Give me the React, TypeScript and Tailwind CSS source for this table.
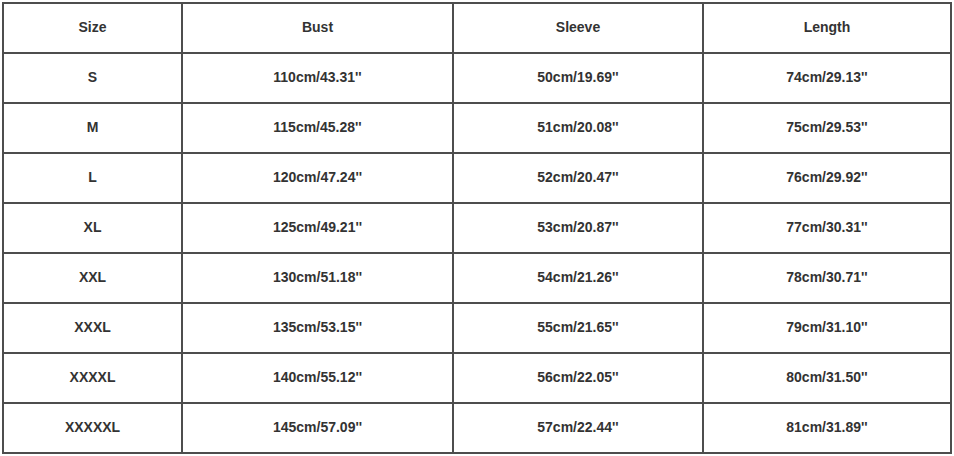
import React from "react";

const rows = [
  ["S", "110cm/43.31''", "50cm/19.69''", "74cm/29.13''"],
  ["M", "115cm/45.28''", "51cm/20.08''", "75cm/29.53''"],
  ["L", "120cm/47.24''", "52cm/20.47''", "76cm/29.92''"],
  ["XL", "125cm/49.21''", "53cm/20.87''", "77cm/30.31''"],
  ["XXL", "130cm/51.18''", "54cm/21.26''", "78cm/30.71''"],
  ["XXXL", "135cm/53.15''", "55cm/21.65''", "79cm/31.10''"],
  ["XXXXL", "140cm/55.12''", "56cm/22.05''", "80cm/31.50''"],
  ["XXXXXL", "145cm/57.09''", "57cm/22.44''", "81cm/31.89''"],
];

export default function App() {
  const all = [["Size", "Bust", "Sleeve", "Length"], ...rows];
  return (
    <div className="w-[954px] h-[456px] bg-white pt-[2px] pl-[2px]" style={{ fontFamily: '"Liberation Sans", Arial, sans-serif' }}>
      <div className="inline-grid grid-cols-[177px_269px_248px_246px] auto-rows-[48px] gap-[2px] p-[2px] bg-[#4d4d4d]">
        {all.map((r, i) =>
          r.map((c, j) => (
            <div key={`${i}-${j}`} className="bg-white flex items-center justify-center pb-[2px] text-[14px] font-bold text-[#333333]">
              {c}
            </div>
          ))
        )}
      </div>
    </div>
  );
}
